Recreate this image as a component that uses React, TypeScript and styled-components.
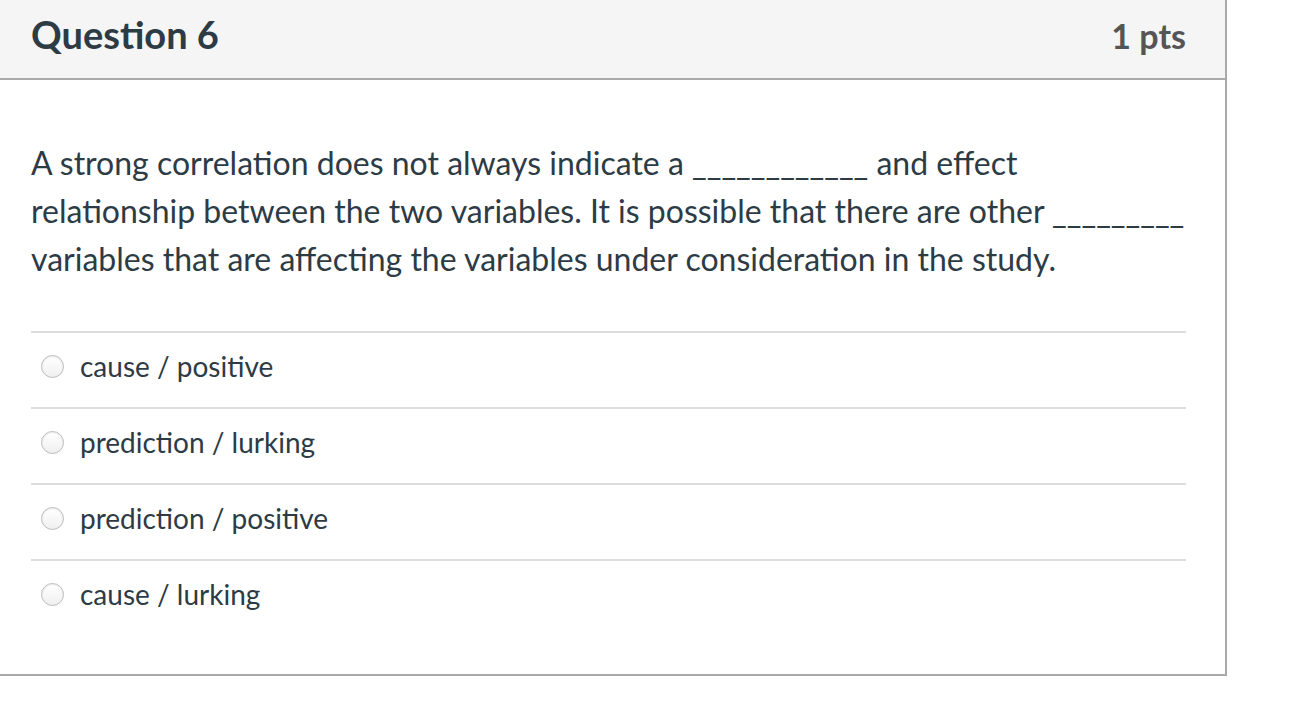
import styled, { createGlobalStyle } from "styled-components";

const GlobalStyle = createGlobalStyle`
  body {
    margin: 0;
    background: #ffffff;
    font-family: "Lato", "Liberation Sans", sans-serif;
    color: #2d3b45;
  }
`;

const answers = [
  "cause / positive",
  "prediction / lurking",
  "prediction / positive",
  "cause / lurking",
];

const App = () => {
  return (
    <>
      <GlobalStyle />
      <Card>
        <Header>
          <Title>Question 6</Title>
          <Points>1 pts</Points>
        </Header>
        <Body>
          <QuestionText>
            A strong correlation does not always indicate a ____________ and
            effect relationship between the two variables. It is possible that
            there are other _________ variables that are affecting the variables
            under consideration in the study.
          </QuestionText>
          <AnswerList>
            {answers.map((a) => (
              <AnswerRow key={a}>
                <Radio />
                <AnswerLabel>{a}</AnswerLabel>
              </AnswerRow>
            ))}
          </AnswerList>
        </Body>
      </Card>
    </>
  );
};

export default App;

const Card = styled.div`
  width: 1225px;
  margin: -2px 0 0 -2px;
  border: 2px solid #a9a9a9;
  background: #ffffff;
`;

const Header = styled.div`
  height: 68px;
  padding: 0 39px 10px 31px;
  background: #f5f5f5;
  border-bottom: 2px solid #a9a9a9;
  display: flex;
  align-items: center;
  justify-content: space-between;
`;

const Title = styled.h2`
  margin: 0;
  font-size: 38px;
  font-weight: 700;
  color: #2d3b45;
`;

const Points = styled.span`
  font-size: 34px;
  font-weight: 700;
  color: #555555;
  margin-top: 2px;
`;

const Body = styled.div`
  padding: 59px 39px 39px 31px;
`;

const QuestionText = styled.p`
  margin: 0 0 48px;
  font-size: 32px;
  line-height: 48px;
  color: #2d3b45;
`;

const AnswerList = styled.div`
  display: flex;
  flex-direction: column;
`;

const AnswerRow = styled.div`
  height: 66px;
  padding: 0 0 8px 10px;
  border-top: 2px solid #dddddd;
  display: flex;
  align-items: center;
  gap: 16px;
`;

const Radio = styled.span`
  width: 21px;
  height: 21px;
  border-radius: 50%;
  border: 1px solid #bcbcbc;
  background: linear-gradient(#ffffff, #f0f0f0);
  box-shadow: inset 0 1px 2px rgba(0, 0, 0, 0.08);
  flex-shrink: 0;
`;

const AnswerLabel = styled.span`
  font-size: 28px;
  color: #2d3b45;
`;
